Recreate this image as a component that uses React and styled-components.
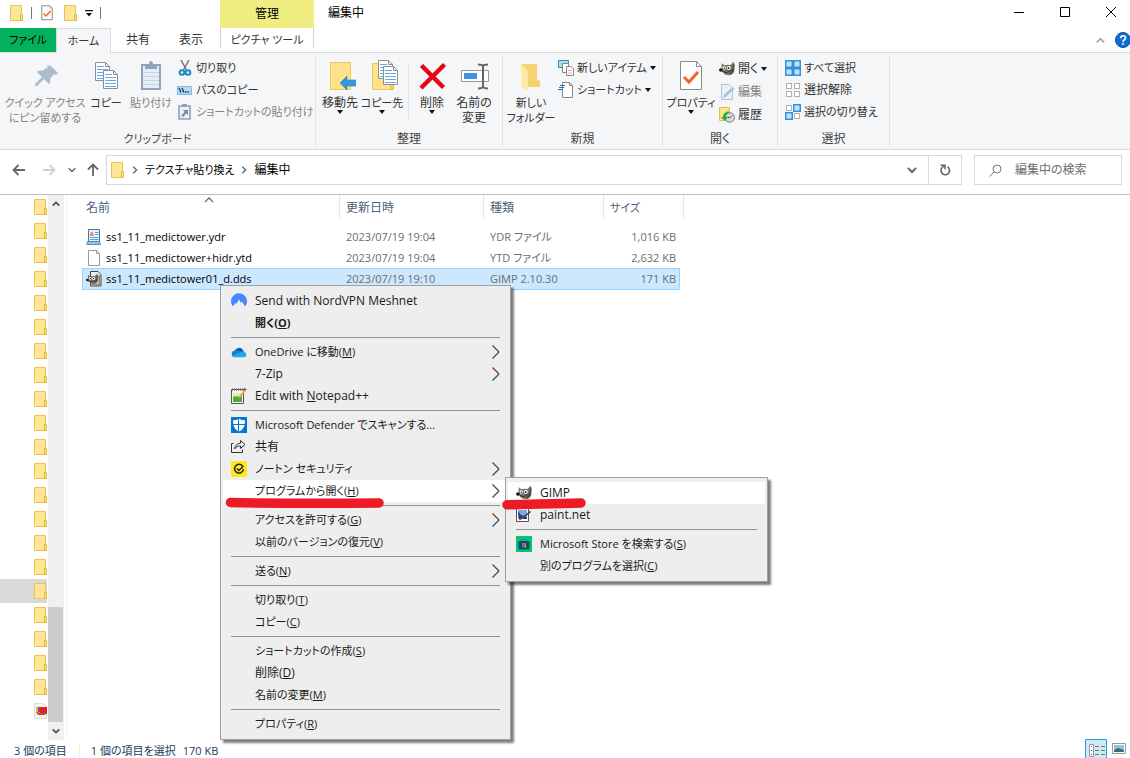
import styled, { createGlobalStyle, css } from "styled-components"

const GlobalStyle = createGlobalStyle`
  * { box-sizing: border-box; }
  body {
    margin: 0;
    overflow: hidden;
    background: #fff;
    color: #000;
    font-family: "Open Sans", "Noto Sans CJK JP", sans-serif;
    font-size: 12px;
    line-height: 16px;
    font-feature-settings: "palt";
  }
  button, input {
    font: inherit;
    color: inherit;
    font-feature-settings: inherit;
  }
  button {
    margin: 0;
    padding: 0;
    border: 0;
    background: none;
    white-space: nowrap;
  }
  ul { margin: 0; padding: 0; list-style: none; }
  svg { display: block; flex: none; }
`

const Window = styled.div`
  display: flex;
  flex-direction: column;
  min-height: 100vh;
`

/* labels with kana are set one size smaller than kanji */
const Kana = styled.span`
  font-size: 11px;
`

/* title bar */
const TitleBar = styled.header`
  display: flex;
  height: 28px;
`
const QuickAccess = styled.div`
  display: flex;
  align-items: center;
  gap: 7px;
  width: 220px;
  padding: 0 0 3px 8px;
`
const QuickLine = styled.span`
  width: 1px;
  height: 12px;
  background: #777;
`
const ContextTab = styled.div`
  display: flex;
  align-items: center;
  justify-content: center;
  width: 94px;
  background: #f0ee82;
`
const Title = styled.h1`
  flex: 1;
  margin: 0;
  padding: 5px 14px;
  font-size: 12px;
  font-weight: 400;
`
const Controls = styled.div`
  display: flex;
  margin-right: -4px;
`
const ControlButton = styled.button`
  display: flex;
  align-items: center;
  justify-content: center;
  width: 46px;
  height: 24px;
`

/* ribbon tabs */
const Tabs = styled.nav`
  display: flex;
  height: 25px;
  border-bottom: 1px solid #dadbdc;
`
const Tab = styled.button`
  width: ${props => props.$w}px;
  height: 24px;
  color: #333;
  ${props => props.$file && css`
    background: #03b15c;
    color: #000;
  `}
  ${props => props.$active && css`
    height: 25px;
    background: #f5f6f7;
    border: 1px solid #dadbdc;
    border-bottom: 0;
  `}
  ${props => props.$tool && css`
    height: 20px;
    margin-left: 3px;
    padding-top: 3px;
    border: solid #d4d4d4;
    border-width: 0 1px;
  `}
`
const TabEnd = styled.div`
  display: flex;
  flex: 1;
  align-items: center;
  justify-content: flex-end;
  gap: 10px;
  margin-right: -1px;
`

/* ribbon */
const Ribbon = styled.section`
  display: flex;
  height: 97px;
  padding: 2px 0 3px;
  background: #f5f6f7;
  border-bottom: 1px solid #dadbdc;
`
const Group = styled.div`
  display: flex;
  flex-direction: column;
  width: ${props => props.$w}px;
  border-right: 1px solid #e2e3e4;
`
const GroupBody = styled.div`
  display: flex;
  flex: 1;
  padding: 2px 0 0 ${props => props.$pad || 3}px;
`
const GroupName = styled.div`
  line-height: 14px;
  text-align: center;
  color: #444;
`
const BigButton = styled.button`
  display: flex;
  flex: none;
  flex-direction: column;
  align-items: center;
  width: ${props => props.$w}px;
  height: 72px;
  padding-top: 3px;
  line-height: 15px;
  color: ${props => (props.disabled ? "#838383" : "#333")};
  > svg:first-child { margin-bottom: 3px; }
`
const BodyLine = styled.span`
  width: 1px;
  height: 56px;
  margin: 7px 2px 0 5px;
  background: #e2e3e4;
`
const SmallList = styled.div`
  display: flex;
  flex-direction: column;
  padding-left: ${props => props.$pad || 0}px;
`
const SmallButton = styled.button`
  display: flex;
  align-items: center;
  gap: 3px;
  height: ${props => props.$h || 22}px;
  color: ${props => (props.disabled ? "#838383" : "#333")};
`

/* address row */
const AddressRow = styled.div`
  display: flex;
  align-items: center;
  height: 45px;
  padding: 0 8px 4px 12px;
  border-bottom: 1px solid #bdbdbd;
`
const NavButtons = styled.div`
  display: flex;
  align-items: center;
  width: 94px;
`
const NavButton = styled.button`
  margin-right: ${props => props.$gap || 0}px;
`
const AddressBox = styled.div`
  display: flex;
  flex: 1;
  align-items: center;
  height: 30px;
  border: 1px solid #d9d9d9;
`
const Crumbs = styled.div`
  display: flex;
  flex: 1;
  align-items: center;
  gap: 6px;
  padding-left: 2px;
`
const BoxButton = styled.button`
  display: flex;
  align-items: center;
  justify-content: center;
  width: 33px;
  height: 28px;
  border-left: ${props => (props.$line ? "1px solid #d9d9d9" : "0")};
`
const SearchBox = styled.label`
  display: flex;
  align-items: center;
  gap: 13px;
  width: 148px;
  height: 30px;
  margin-left: 12px;
  padding-left: 14px;
  border: 1px solid #d9d9d9;
  input {
    width: 100px;
    padding: 0;
    border: 0;
    outline: 0;
    background: none;
  }
  input::placeholder { color: #6d6d6d; opacity: 1; }
`

/* main area */
const Main = styled.main`
  position: relative;
  display: flex;
  flex: 1 1 0;
  height: 545px;
`
const Tree = styled.ul`
  width: 47px;
  margin-right: 1px;
  overflow: hidden;
`
const TreeItem = styled.li`
  display: flex;
  align-items: center;
  height: 24px;
  padding-left: 32px;
  background: ${props => (props.$on ? "#d9d9d9" : "none")};
`
const ScrollTrack = styled.div`
  display: flex;
  flex-direction: column;
  width: 16px;
  background: #f0f0f0;
`
const ScrollArrow = styled.button`
  display: flex;
  align-items: center;
  justify-content: center;
  width: 15px;
  height: 18px;
`
const ScrollThumb = styled.div`
  width: 15px;
  height: 115px;
  margin-top: auto;
  background: #cdcdcd;
`
const FilePane = styled.div`
  flex: 1;
  margin-left: 2px;
  padding-left: 15px;
  border-left: 1px solid #f3f3f3;
`
const FileTable = styled.table`
  width: 602px;
  table-layout: fixed;
  border-spacing: 0;
  tbody::before {
    content: "";
    display: block;
    height: 7px;
  }
`
const HeadCell = styled.th`
  position: relative;
  width: ${props => props.$w}px;
  height: 24px;
  padding: 1px 0 0 ${props => (props.$first ? 4 : 6)}px;
  border-right: 1px solid #e5e5e5;
  color: #4c607a;
  font-weight: 400;
  text-align: left;
  > svg {
    position: absolute;
    top: 0;
    left: 122px;
  }
`
const Cell = styled.td`
  height: 21px;
  padding: 0 0 0 6px;
  color: #6d6d6d;
  font-size: 11px;
  white-space: nowrap;
  &:first-child { padding-left: 4px; color: #000; }
  &:last-child {
    padding-right: 4px;
    border-right: 4px solid transparent;
    background-clip: padding-box;
    text-align: right;
  }
`
const FileRow = styled.tr`
  ${props => props.$on && css`
    ${Cell} {
      height: 22px;
      background-color: #cce8ff;
      box-shadow: inset 0 1px #99d1ff, inset 0 -1px #99d1ff;
    }
    ${Cell}:first-child { box-shadow: inset 1px 1px #99d1ff, inset 0 -1px #99d1ff; }
    ${Cell}:last-child { box-shadow: inset 0 1px #99d1ff, inset -1px -1px #99d1ff; }
  `}
`
const FileName = styled.div`
  display: flex;
  align-items: center;
  gap: 4px;
`

/* context menu */
const Menu = styled.ul`
  position: absolute;
  top: ${props => props.$top}px;
  left: ${props => props.$left}px;
  width: ${props => props.$w}px;
  padding: 4px 2px;
  background: #eee;
  border: 1px solid #a0a0a0;
  box-shadow: 3px 3px 2px rgba(0, 0, 0, 0.5);
`
const MenuRow = styled.li`
  position: relative;
`
const MenuButton = styled.button`
  display: flex;
  align-items: center;
  gap: 8px;
  width: 100%;
  height: 22px;
  padding: 0 8px;
  background: ${props => (props.$on ? "#fff" : "none")};
  color: #1a1a1a;
  font-size: ${props => (props.$kana ? 11 : 12)}px;
  font-weight: ${props => (props.$bold ? 700 : 400)};
  text-align: left;
`
const IconSlot = styled.span`
  width: 16px;
  height: 16px;
`
const MenuText = styled.span`
  flex: 1;
`
const MenuLine = styled.li`
  height: 1px;
  margin: 3px 8px;
  background: #919191;
`
const Marker = styled.svg`
  position: absolute;
  top: 12px;
  left: -3px;
  pointer-events: none;
`

/* status bar */
const StatusBar = styled.footer`
  display: flex;
  align-items: center;
  height: 18px;
  padding: 3px 4px 0 14px;
  color: #1e395b;
  font-size: 11px;
`
const StatusText = styled.span`
  padding-right: ${props => props.$right || 0}px;
`
const StatusLine = styled.span`
  width: 1px;
  height: 14px;
  margin-right: 11px;
  background: #eee;
`
const Views = styled.div`
  display: flex;
  align-items: center;
  gap: 5px;
  margin: -3px 0 0 auto;
`

/* icons */
function Folder({ size = 16 }) {
  return (
    <svg width={size} height={size} viewBox="0 0 16 16">
      <path d="M2.5.5h11v15h-11z" fill="#ffe694" stroke="#e9c44e" />
      <path d="M12.500 9.500h2v6h-2z" fill="#ffe082" stroke="#e3b93f" />
    </svg>
  )
}

function CheckDoc({ big }) {
  return (
    <svg width={big ? 32 : 16} height={big ? 32 : 16} viewBox="0 0 32 32">
      <path d="M5.500 1.500h16l5 5v23h-21z" fill="#fff" stroke="#8a8a8a" strokeWidth={big ? 1 : 2} />
      <path d="M21.500 1.500v5h5" fill="none" stroke="#8a8a8a" />
      <path d="M9 17l5 5 9-10" fill="none" stroke="#f26522" strokeWidth="3" />
    </svg>
  )
}

function Caret() {
  return <svg width="6" height="4" viewBox="0 0 6 4"><path d="M0 0h6L3 4z" fill="#111" /></svg>
}

function Chevron({ dir = "down", size = 8, color = "#666", w = 2 }) {
  const turn = { down: 0, left: 90, up: 180, right: 270 }[dir]
  return (
    <svg width={size} height={size} viewBox="0 0 8 8">
      <path d="M.7 2.300L4 5.600l3.300-3.300" fill="none" stroke={color} strokeWidth={w} transform={`rotate(${turn} 4 4)`} />
    </svg>
  )
}

function Pin() {
  return (
    <svg width="32" height="32" viewBox="0 0 32 32" fill="#adbccd">
      <path d="M20 5l7 7-2 2-2-1-4 5c1 3 0 4-1 5l-5-5-7 7H4v-2l7-7-5-5c1-1 3-2 5-1l6-4-1-2z" transform="translate(2 1)" />
    </svg>
  )
}

function Page({ x, y }) {
  return (
    <g transform={`translate(${x} ${y})`}>
      <path d="M.5.5h10l4 4v14H.5z" fill="#fff" stroke="#8a8f96" />
      <path d="M10.500.5v4h4" fill="none" stroke="#8a8f96" />
      <path d="M2 4.500h7M2 7.500h11M2 10.500h11M2 13.500h11M2 16.500h11" stroke="#6aa8ea" strokeWidth="1" />
    </g>
  )
}

function CopyIcon() {
  return (
    <svg width="32" height="32" viewBox="0 0 32 32"><Page x={5} y={2} /><Page x={13} y={10} /></svg>
  )
}

function PasteIcon() {
  return (
    <svg width="32" height="32" viewBox="0 0 32 32">
      <path d="M7 5h18v24H7z" fill="#e6edf6" stroke="#8fa1bb" strokeWidth="2" />
      <path d="M8 12.500h16M8 16.500h16M8 20.500h16M8 24.500h16" stroke="#c6d2e2" />
      <path d="M10 4h4c0-4 4-4 4 0h4v5H10z" fill="#8fa1bb" />
    </svg>
  )
}

function Scissors() {
  return (
    <svg width="16" height="16" viewBox="0 0 16 16" fill="none">
      <path d="M4 0l5.500 10M12 0L6.500 10" stroke="#6c7986" strokeWidth="1.500" />
      <circle cx="5" cy="12.500" r="2.300" stroke="#1c87c9" strokeWidth="2" />
      <circle cx="11" cy="12.500" r="2.300" stroke="#1c87c9" strokeWidth="2" />
    </svg>
  )
}

function PathIcon() {
  return (
    <svg width="16" height="16" viewBox="0 0 16 16">
      <path d="M.5 4.500h14v8H.5z" fill="#b5dcf7" stroke="#7fb9e3" />
      <path d="M2 6l2 4.500M5 6l2 4.500M8 10h1.500M10.500 10H12" stroke="#14365c" strokeWidth="1.300" />
    </svg>
  )
}

function PasteLink() {
  return (
    <svg width="16" height="16" viewBox="0 0 16 16">
      <path d="M2 2h11v13H2z" fill="#e9eef6" stroke="#8fa1bb" strokeWidth="1.600" />
      <path d="M5 0h5v3H5z" fill="#8fa1bb" />
      <path d="M6 6h5v5L9.300 9.300 6 13 4.500 11.500 7.700 7.700z" fill="#7389aa" />
    </svg>
  )
}

function MoveTo() {
  return (
    <svg width="32" height="32" viewBox="0 0 32 32">
      <path d="M6.500 2.500h20v27h-20z" fill="#ffe28a" stroke="#ebc85c" />
      <path d="M16 23l7-7v4h9v6h-9v4z" fill="#3596e4" stroke="#2a7fc8" strokeWidth=".6" />
    </svg>
  )
}

function CopyTo() {
  return (
    <svg width="32" height="32" viewBox="0 0 32 32">
      <path d="M6.500 3.500h20v26h-20z" fill="#ffe28a" stroke="#ebc85c" />
      <path d="M24.500 20.500h3v9h-3z" fill="#ffd966" stroke="#e3b93f" />
      <Page x={12} y={0} />
      <Page x={17} y={6} />
    </svg>
  )
}

function DeleteIcon() {
  return (
    <svg width="32" height="32" viewBox="0 0 32 32">
      <path d="M5.500 5.500l22 22M28.500 4.500L5 28" stroke="#e30613" strokeWidth="4.500" />
    </svg>
  )
}

function RenameIcon() {
  return (
    <svg width="32" height="32" viewBox="0 0 32 32">
      <path d="M3.500 10.500h27v11h-27z" fill="#fff" stroke="#9a9a9a" />
      <path d="M6 13h13v6H6z" fill="#3a96e3" />
      <path d="M20 4.500c3 0 4 0 5 1.500 1-1.500 2-1.500 5-1.500M25 6v21M20 28.500c3 0 4 0 5-1.500 1 1.500 2 1.500 5 1.500" fill="none" stroke="#666" strokeWidth="2" />
    </svg>
  )
}

function NewFolder() {
  return (
    <svg width="32" height="32" viewBox="0 0 32 32">
      <path d="M6 4h16v15l3 2v6H6z" fill="#f6d273" />
      <path d="M6 4l7 7v20l-7-4z" fill="#ffe9a8" />
    </svg>
  )
}

function NewItem() {
  return (
    <svg width="16" height="16" viewBox="0 0 16 16">
      <path d="M.5.5h10v7H.5z" fill="#a8dcf5" stroke="#3d8ab8" />
      <path d="M4.500 3.500h6v9h-6z" fill="#fff" stroke="#888" />
      <path d="M8.500 6.500h4l3 2v7h-7z" fill="#fff" stroke="#888" />
      <path d="M10 10.500h4M10 13h4" stroke="#f0a8a8" />
    </svg>
  )
}

function ShortcutIcon() {
  return (
    <svg width="16" height="16" viewBox="0 0 16 16">
      <path d="M4.500.5h7l3 3v12h-10z" fill="#fff" stroke="#888" />
      <path d="M11.500.5v3h3" fill="none" stroke="#888" />
      <path d="M2 3.500h5M1 5.500h5M0 7.500h4" stroke="#2673b8" />
    </svg>
  )
}

function Wilber() {
  return (
    <g>
      <path d="M2.800 2.200L5.500 4.300q3-1 6-.3L14.500.8l1.300 3-.5 6.700q-1.500 3.500-5.300 3.700-4.500 0-6-3L1.500 11Q0 10.500 0 8.800q0-1.600 2.500-2z" fill="#78746a" />
      <path d="M14 3.500l1 .5-.5 6q-1.500 3-5 3.200 4-3 4.500-9.700z" fill="#45423b" />
      <path d="M4 10.500q4 2.500 8-1.500" fill="none" stroke="#2c2a26" />
      <circle cx="5.300" cy="7" r="1.700" fill="#fff" />
      <circle cx="9.800" cy="7" r="2" fill="#fff" />
      <circle cx="5.500" cy="7.200" r=".8" fill="#111" />
      <circle cx="9.600" cy="7.200" r=".9" fill="#111" />
      <ellipse cx="2" cy="9" rx="1.800" ry="1.300" fill="#1b1a18" />
    </g>
  )
}

function Gimp({ frame }) {
  return (
    <svg width="16" height="16" viewBox="0 0 16 16">
      {frame ? (
        <>
          <path d="M4.500.5h7.500l3 3v11.500h-10.500z" fill="#f4f1e8" stroke="#4a4640" />
          <path d="M12.500 4h2v10.500h-9v-2h7z" fill="#8b857a" />
          <g transform="translate(0 2) scale(.78)"><Wilber /></g>
        </>
      ) : <Wilber />}
    </svg>
  )
}

function EditIcon() {
  return (
    <svg width="16" height="16" viewBox="0 0 16 16">
      <path d="M2.500.5h8l3 3v12h-11z" fill="#eaf0f8" stroke="#b4c2d8" />
      <path d="M4 14l1-3 8.500-8 2 1.500-8.500 8z" fill="#a9badb" />
    </svg>
  )
}

function HistoryIcon() {
  return (
    <svg width="16" height="16" viewBox="0 0 16 16">
      <path d="M.5.5h10v13H.5z" fill="#ffe28a" stroke="#e3bf4e" />
      <circle cx="10.800" cy="10.500" r="4.700" fill="#dcdcdc" stroke="#777" />
      <path d="M10.500 11l2.500-2.500M10.500 11l-2-1" fill="none" stroke="#444" />
      <path d="M10 4.500C6 4.500 4 7 4 10H1.500l4.500 4 3-4H7c0-2 1-3.500 3-4z" fill="#27b03a" />
    </svg>
  )
}

function SelectIcon({ on }) {
  const spots = [[0, 0], [8, 0], [0, 8], [8, 8]]
  return (
    <svg width="16" height="16" viewBox="0 0 16 16">
      {spots.map(([x, y], i) => on[i] ? (
        <rect key={i} x={x + 0.75} y={y + 0.75} width="6.500" height="6.500" fill="#bfe3fb" stroke="#3191dd" strokeWidth="1.500" />
      ) : (
        <rect key={i} x={x + 1.5} y={y + 1.5} width="5" height="5" fill="#fff" stroke="#b0b0b0" />
      ))}
    </svg>
  )
}

function Arrow({ dir, color = "#666" }) {
  const turn = { left: 0, up: 90, right: 180 }[dir]
  return (
    <svg width="14" height="14" viewBox="0 0 14 14">
      <path d="M1.500 7H13M6.500 2l-5 5 5 5" fill="none" stroke={color} strokeWidth="1.800" transform={`rotate(${turn} 7 7)`} />
    </svg>
  )
}

function YdrIcon() {
  return (
    <svg width="16" height="16" viewBox="0 0 16 16">
      <path d="M2.500.5h11v12h-11z" fill="#e8f4fc" stroke="#3f78a8" />
      <path d="M1.500 12.500h12l1 3H.8z" fill="#9cc4e2" stroke="#47779f" strokeWidth=".8" />
      <path d="M4 7l1.800-4L7.500 7M4.500 5.800h2.500" fill="none" stroke="#e8662a" />
      <path d="M9 3.500h3.500M9 5.500h3.500M4 8.500h8.500M4 10.500h8.500" stroke="#5f9fd2" />
    </svg>
  )
}

function BlankDoc() {
  return (
    <svg width="16" height="16" viewBox="0 0 16 16">
      <path d="M2.500.5h8l3 3v12h-11z" fill="#fff" stroke="#999" />
      <path d="M10.500.5v3h3" fill="none" stroke="#999" />
    </svg>
  )
}

function PictureFile() {
  return (
    <svg width="16" height="16" viewBox="0 0 16 16">
      <path d="M2.500.5h8l4 3v12h-12z" fill="#f3f3f3" stroke="#ddd" />
      <path d="M4 4h5v6H4z" fill="#f4b400" /><path d="M6 4h4v5H6z" fill="#8e3bd0" />
      <path d="M8 4h7v7H8z" fill="#e3202a" /><path d="M4 9l5 1 5-1-1 3H6z" fill="#b0521c" />
    </svg>
  )
}

function Nord() {
  return (
    <svg width="16" height="16" viewBox="0 0 16 16">
      <path d="M2 13.500A8 8 0 1 1 14 13.500L11 8.500l-1 1.500L8 6.500 5.500 11 5 9.500z" fill="#4687ff" />
    </svg>
  )
}

function OneDrive() {
  return (
    <svg width="16" height="16" viewBox="0 0 16 16">
      <path d="M3.500 7A4.800 4.800 0 0 1 12 6l1 2-6 3-5 1z" fill="#0a5fb5" />
      <path d="M3.500 6.500c3-1 5 .5 6 1.500l-6 5A3.300 3.300 0 0 1 3.500 6.500z" fill="#1183d6" />
      <path d="M9 8.500c2.500-2 4.500-1.500 5 0A2.500 2.500 0 0 1 13.500 13.200H3.500C1.500 13.200 1 12 1 12z" fill="#28a8ea" />
    </svg>
  )
}

function Notepad() {
  return (
    <svg width="16" height="16" viewBox="0 0 16 16">
      <path d="M.5 1.500h12v14H.5z" fill="#f4f4ee" stroke="#555" />
      <path d="M1 1.500h11" stroke="#555" strokeDasharray="1 1" strokeWidth="2" />
      <path d="M2 5h9v9H2z" fill="#e2f0a8" /><path d="M2 9c3-2 6 1 9-1v6H2z" fill="#4bae35" />
      <path d="M8 10l.7-2.500L13 2l1.500 1-4 5.500z" fill="#f4a93c" /><path d="M12.500 1.500L13.500 0l2 1.300-.8 1.500z" fill="#b3202a" />
    </svg>
  )
}

function Defender() {
  return (
    <svg width="16" height="16" viewBox="0 0 16 16">
      <path d="M0 0h16v16H0z" fill="#0078d7" />
      <path d="M8 1.500c2 1.500 4 1.700 6 1.700 0 6-1.500 9-6 11.300C3.500 12.200 2 9.200 2 3.200c2 0 4-.2 6-1.700z" fill="#fff" />
      <path d="M7.500 1v14M1.500 7.500h13" stroke="#0078d7" />
    </svg>
  )
}

function Share() {
  return (
    <svg width="16" height="16" viewBox="0 0 16 16" fill="none" stroke="#333">
      <path d="M2.500 4.500h-2v9h11v-3" />
      <path d="M9.500 1.500l4.500 4-4.500 4v-2.500c-3 0-4.500 1-6 3 .5-3.500 2.500-5.500 6-5.800z" />
    </svg>
  )
}

function Norton() {
  return (
    <svg width="16" height="16" viewBox="0 0 16 16">
      <rect width="16" height="16" rx="1" fill="#ffe81a" />
      <path d="M11.500 5A4.400 4.400 0 1 0 12.400 8" fill="none" stroke="#222" strokeWidth="1.500" />
      <path d="M5.800 7.500L7.800 9.500 12.500 5" fill="none" stroke="#222" strokeWidth="1.400" />
    </svg>
  )
}

function PaintNet() {
  return (
    <svg width="16" height="16" viewBox="0 0 16 16">
      <path d="M.5 1.500h12v13H.5z" fill="#fff" stroke="#555" />
      <path d="M2 3h9v6l-4 3H2z" fill="#7aa9ea" /><path d="M2 4l3 4 6 2v2H3z" fill="#183c9a" />
      <path d="M6 11.500l8.500-7" stroke="#333" strokeWidth="1.500" /><path d="M3.500 13l4-3" stroke="#b8342c" strokeWidth="1.500" />
    </svg>
  )
}

function Store() {
  return (
    <svg width="16" height="16" viewBox="0 0 16 16">
      <path d="M0 0h16v16H0z" fill="#05c668" />
      <path d="M5.500 5V3.500h5V5" fill="none" stroke="#1784d0" />
      <path d="M2.500 5h11v7.500q0 1-1 1h-9q-1 0-1-1z" fill="#12447e" />
      <path d="M5.800 7h2v2h-2z" fill="#f25022" /><path d="M8.200 7h2v2h-2z" fill="#7fba00" />
      <path d="M5.800 9.400h2v2h-2z" fill="#00a4ef" /><path d="M8.200 9.400h2v2h-2z" fill="#ffb900" />
    </svg>
  )
}

function SubArrow() {
  return (
    <svg width="8" height="14" viewBox="0 0 8 14" fill="none" strokeWidth="1.200">
      <path d="M.5.5L7 7" stroke="#7a3434" /><path d="M7 7L.5 13.500" stroke="#2c4f8c" />
    </svg>
  )
}

const files = [
  { name: "ss1_11_medictower.ydr", date: "2023/07/19 19:04", type: "YDR ファイル", size: "1,016 KB", icon: <YdrIcon /> },
  { name: "ss1_11_medictower+hidr.ytd", date: "2023/07/19 19:04", type: "YTD ファイル", size: "2,632 KB", icon: <BlankDoc /> },
  { name: "ss1_11_medictower01_d.dds", date: "2023/07/19 19:10", type: "GIMP 2.10.30", size: "171 KB", icon: <Gimp frame />, on: true },
]

// null draws a separator line
const openWith = [
  { text: "GIMP", icon: <Gimp />, on: true },
  { text: "paint.net", icon: <PaintNet /> },
  null,
  { text: "Microsoft Store を検索する(", hot: "S", end: ")", icon: <Store /> },
  { text: "別のプログラムを選択(", hot: "C", end: ")" },
]

const menu = [
  { text: "Send with NordVPN Meshnet", icon: <Nord /> },
  { text: "開く(", hot: "O", end: ")", bold: true },
  null,
  { text: "OneDrive に移動(", hot: "M", end: ")", icon: <OneDrive />, more: true },
  { text: "7-Zip", more: true },
  { text: "Edit with ", hot: "N", end: "otepad++", icon: <Notepad /> },
  null,
  { text: "Microsoft Defender でスキャンする...", icon: <Defender /> },
  { text: "共有", icon: <Share /> },
  { text: "ノートン セキュリティ", icon: <Norton />, more: true },
  { text: "プログラムから開く(", hot: "H", end: ")", more: true, on: true, sub: openWith },
  null,
  { text: "アクセスを許可する(", hot: "G", end: ")", more: true },
  { text: "以前のバージョンの復元(", hot: "V", end: ")" },
  null,
  { text: "送る(", hot: "N", end: ")", more: true },
  null,
  { text: "切り取り(", hot: "T", end: ")" },
  { text: "コピー(", hot: "C", end: ")" },
  null,
  { text: "ショートカットの作成(", hot: "S", end: ")" },
  { text: "削除(", hot: "D", end: ")" },
  { text: "名前の変更(", hot: "M", end: ")" },
  null,
  { text: "プロパティ(", hot: "R", end: ")" },
]

function MenuItems({ items }) {
  return items.map((item, i) => item === null ? (
    <MenuLine key={i} role="separator" />
  ) : (
    <MenuRow key={i} role="none">
      <MenuButton role="menuitem" $on={item.on} $bold={item.bold} $kana={/[ぁ-ヶ]/.test(item.text)}>
        <IconSlot>{item.icon}</IconSlot>
        <MenuText>{item.text}{item.hot && <u>{item.hot}</u>}{item.end}</MenuText>
        {item.more && <SubArrow />}
      </MenuButton>
      {item.sub && (
        <>
          <Menu role="menu" $top={-3} $left={282} $w={263}>
            <MenuItems items={item.sub} />
          </Menu>
          <Marker width="376" height="22" viewBox="0 0 376 22" fill="none" stroke="#ed1c24" strokeLinecap="round" strokeLinejoin="round">
            <path d="M10.500 10.500C60 11.500 110 11.500 159 11" strokeWidth="9.500" />
            <path d="M287 12.800C310 12 335 12 361 11" strokeWidth="9.500" />
          </Marker>
        </>
      )}
    </MenuRow>
  ))
}

function App() {
  return (
    <>
      <GlobalStyle />
      <Window>
        <TitleBar>
          <QuickAccess>
            <Folder />
            <QuickLine />
            <CheckDoc />
            <Folder />
            <svg width="8" height="8" viewBox="0 0 8 8"><path d="M0 1h8v1.200H0zM1 4h6L4 7.500z" fill="#111" /></svg>
            <QuickLine />
          </QuickAccess>
          <ContextTab>管理</ContextTab>
          <Title>編集中</Title>
          <Controls>
            <ControlButton aria-label="最小化"><svg width="10" height="10"><path d="M0 5.500h10" stroke="#000" /></svg></ControlButton>
            <ControlButton aria-label="最大化"><svg width="10" height="10"><path d="M.5.5h9v9h-9z" fill="none" stroke="#000" /></svg></ControlButton>
            <ControlButton aria-label="閉じる"><svg width="10" height="10"><path d="M0 0l10 10M10 0L0 10" stroke="#000" /></svg></ControlButton>
          </Controls>
        </TitleBar>

        <Tabs>
          <Tab $w={56} $file><Kana>ファイル</Kana></Tab>
          <Tab $w={55} $active><Kana>ホーム</Kana></Tab>
          <Tab $w={54}>共有</Tab>
          <Tab $w={52}>表示</Tab>
          <Tab $w={94} $tool><Kana>ピクチャ ツール</Kana></Tab>
          <TabEnd>
            <Chevron dir="up" color="#999" w={1.2} size={9} />
            <svg width="16" height="16" viewBox="0 0 16 16">
              <circle cx="8" cy="8" r="7.500" fill="#0f6fd0" stroke="#0a4f9e" />
              <path d="M5.600 6.200c0-3.200 4.900-3.200 4.900-.3C10.500 7.800 8 7.800 8 9.800M8 11v1.700" fill="none" stroke="#fff" strokeWidth="1.700" />
            </svg>
          </TabEnd>
        </Tabs>

        <Ribbon>
          <Group $w={316}>
            <GroupBody>
              <BigButton $w={84} disabled><Pin /><Kana>クイック アクセス<br />にピン留めする</Kana></BigButton>
              <BigButton $w={38}><CopyIcon /><Kana>コピー</Kana></BigButton>
              <BigButton $w={52} disabled><PasteIcon /><Kana>貼り付け</Kana></BigButton>
              <SmallList>
                <SmallButton><Scissors /><Kana>切り取り</Kana></SmallButton>
                <SmallButton><PathIcon /><Kana>パスのコピー</Kana></SmallButton>
                <SmallButton disabled><PasteLink /><Kana>ショートカットの貼り付け</Kana></SmallButton>
              </SmallList>
            </GroupBody>
            <GroupName><Kana>クリップボード</Kana></GroupName>
          </Group>
          <Group $w={187}>
            <GroupBody>
              <BigButton $w={42}><MoveTo />移動先<Caret /></BigButton>
              <BigButton $w={42}><CopyTo /><Kana>コピー先</Kana><Caret /></BigButton>
              <BodyLine />
              <BigButton $w={42}><DeleteIcon />削除<Caret /></BigButton>
              <BigButton $w={42}><RenameIcon />名前の<br />変更</BigButton>
            </GroupBody>
            <GroupName>整理</GroupName>
          </Group>
          <Group $w={160}>
            <GroupBody>
              <BigButton $w={50}><NewFolder /><Kana>新しい<br />フォルダー</Kana></BigButton>
              <SmallList $pad={2}>
                <SmallButton><NewItem /><Kana>新しいアイテム</Kana><Caret /></SmallButton>
                <SmallButton><ShortcutIcon /><Kana>ショートカット</Kana><Caret /></SmallButton>
              </SmallList>
            </GroupBody>
            <GroupName>新規</GroupName>
          </Group>
          <Group $w={115}>
            <GroupBody>
              <BigButton $w={50}><CheckDoc big /><Kana>プロパティ</Kana><Caret /></BigButton>
              <SmallList $pad={3}>
                <SmallButton $h={23}><Gimp />開く<Caret /></SmallButton>
                <SmallButton $h={23} disabled><EditIcon />編集</SmallButton>
                <SmallButton $h={23}><HistoryIcon />履歴</SmallButton>
              </SmallList>
            </GroupBody>
            <GroupName>開く</GroupName>
          </Group>
          <Group $w={112}>
            <GroupBody $pad={7}>
              <SmallList>
                <SmallButton><SelectIcon on={[1, 1, 1, 1]} /><Kana>すべて選択</Kana></SmallButton>
                <SmallButton><SelectIcon on={[0, 0, 0, 0]} />選択解除</SmallButton>
                <SmallButton><SelectIcon on={[0, 1, 1, 0]} /><Kana>選択の切り替え</Kana></SmallButton>
              </SmallList>
            </GroupBody>
            <GroupName>選択</GroupName>
          </Group>
        </Ribbon>

        <AddressRow>
          <NavButtons>
            <NavButton $gap={16} aria-label="戻る"><Arrow dir="left" /></NavButton>
            <NavButton $gap={12} aria-label="進む"><Arrow dir="right" color="#d0d0d0" /></NavButton>
            <NavButton $gap={10} aria-label="最近表示した場所"><Chevron w={1.4} /></NavButton>
            <NavButton aria-label="上へ"><Arrow dir="up" /></NavButton>
          </NavButtons>
          <AddressBox>
            <Crumbs>
              <Folder />
              <Chevron dir="right" w={1.4} />
              <Kana>テクスチャ貼り換え</Kana>
              <Chevron dir="right" w={1.4} />
              <span>編集中</span>
            </Crumbs>
            <BoxButton aria-label="以前の場所"><Chevron size={10} w={1.6} /></BoxButton>
            <BoxButton $line aria-label="最新の情報に更新">
              <svg width="12" height="12" viewBox="0 0 12 12" fill="none" stroke="#666" strokeWidth="1.600">
                <path d="M8.500 2.800A4.300 4.300 0 1 1 3 3.700L5.300 1.500M1.500 1.300h4.500v4" />
              </svg>
            </BoxButton>
          </AddressBox>
          <SearchBox>
            <svg width="13" height="13" viewBox="0 0 13 13" fill="none" stroke="#777">
              <circle cx="8" cy="5" r="4" /><path d="M5 8L.5 12.500" />
            </svg>
            <input type="text" placeholder="編集中の検索" aria-label="編集中の検索" />
          </SearchBox>
        </AddressRow>

        <Main>
          <Tree>
            {Array.from({ length: 22 }, (_, i) => (
              <TreeItem key={i} $on={i === 16}>{i === 21 ? <PictureFile /> : <Folder />}</TreeItem>
            ))}
          </Tree>
          <ScrollTrack>
            <ScrollArrow aria-label="上へスクロール"><Chevron dir="up" color="#505050" w={1.8} /></ScrollArrow>
            <ScrollThumb />
            <ScrollArrow aria-label="下へスクロール"><Chevron color="#505050" w={1.8} /></ScrollArrow>
          </ScrollTrack>
          <FilePane>
            <FileTable>
              <thead>
                <tr>
                  <HeadCell $w={258} $first>名前<Chevron dir="up" w={1} size={10} /></HeadCell>
                  <HeadCell $w={144}>更新日時</HeadCell>
                  <HeadCell $w={120}>種類</HeadCell>
                  <HeadCell $w={80}><Kana>サイズ</Kana></HeadCell>
                </tr>
              </thead>
              <tbody>
                {files.map(file => (
                  <FileRow key={file.name} $on={file.on}>
                    <Cell><FileName>{file.icon}{file.name}</FileName></Cell>
                    <Cell>{file.date}</Cell>
                    <Cell>{file.type}</Cell>
                    <Cell>{file.size}</Cell>
                  </FileRow>
                ))}
              </tbody>
            </FileTable>
          </FilePane>
          <Menu role="menu" $top={90} $left={220} $w={291}>
            <MenuItems items={menu} />
          </Menu>
        </Main>

        <StatusBar>
          <StatusText $right={12}>3 個の項目</StatusText>
          <StatusLine />
          <StatusText $right={7}>1 個の項目を選択</StatusText>
          <StatusText>170 KB</StatusText>
          <Views>
            <button aria-label="詳細">
              <svg width="22" height="20" viewBox="0 0 22 20">
                <path d="M.5.5h21v19H.5z" fill="#cde8f6" stroke="#26a0da" />
                <path d="M4.500 5.500h4v12h-4z" fill="#fff" stroke="#999" />
                <path d="M10 7.500h4M16 7.500h4M10 11.500h4M16 11.500h4M10 15.500h4M16 15.500h4" stroke="#777" />
                <path d="M6 7h1v1H6z" fill="#2a8a4a" /><path d="M6 11h1v1H6z" fill="#26d" /><path d="M6 15h1v1H6z" fill="#d22" />
              </svg>
            </button>
            <button aria-label="大アイコン">
              <svg width="14" height="12" viewBox="0 0 14 12">
                <path d="M.5.5h13v10H.5z" fill="#fff" stroke="#999" />
                <path d="M2 2h10v7H2z" fill="#8fc1ee" /><path d="M2 7l4-2 6 2v2H2z" fill="#3d6f6a" />
              </svg>
            </button>
          </Views>
        </StatusBar>
      </Window>
    </>
  )
}

export default App
